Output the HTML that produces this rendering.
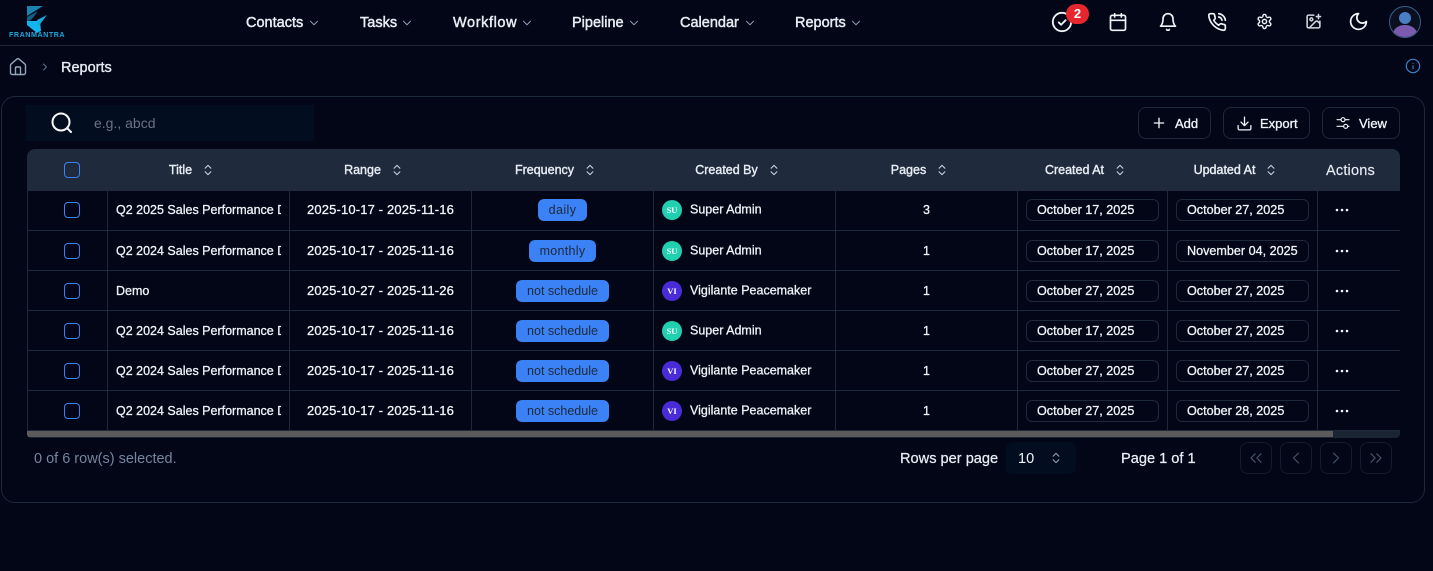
<!DOCTYPE html>
<html><head><meta charset="utf-8"><title>Reports</title>
<style>
*{box-sizing:border-box;margin:0;padding:0}
html,body{width:1433px;height:571px;overflow:hidden;background:#020617;color:#f1f5f9;font-family:"Liberation Sans",sans-serif}
.a{position:absolute;white-space:nowrap}
svg{fill:none;stroke:currentColor;stroke-width:2;stroke-linecap:round;stroke-linejoin:round;display:block}
.nav{top:15px;font-size:14.5px;line-height:17px;color:#e8edf4;-webkit-text-stroke:.45px #e8edf4}
.nc{top:16px;width:14px;height:14px;color:#94a3b8;stroke-width:1.6}
.ic{width:20px;height:20px;color:#f1f5f9}
.btn{top:107px;height:32px;border:1px solid #1e293b;border-radius:8px}
.bt{top:116px;font-size:13px;line-height:15px;-webkit-text-stroke:.3px #f1f5f9}
table{position:absolute;left:27px;top:149px;width:1373px;table-layout:fixed;border-collapse:separate;border-spacing:0}
th{height:42px;background:#1f2a3c;font-size:12.5px;font-weight:400;color:#e8edf4;text-align:center;white-space:nowrap;padding-right:14px;-webkit-text-stroke:.4px #e8edf4}
th:first-child{border-top-left-radius:8px;padding-right:0}
th:last-child{border-top-right-radius:8px;font-size:14.5px;letter-spacing:.2px;text-align:left;padding:2px 0 0 8px;-webkit-text-stroke:.15px #e8edf4}
th svg{display:inline-block;width:14px;height:14px;vertical-align:-3px;margin-left:9px;color:#cbd5e1;stroke-width:1.8}
td{height:40px;border-right:1px solid #1e293b;border-bottom:1px solid #1e293b;font-size:12.5px;text-align:center;white-space:nowrap;overflow:hidden;color:#f1f5f9;-webkit-text-stroke:.28px #f1f5f9}
tr.f td{padding-bottom:2px}
td:first-child{border-left:1px solid #1e293b}
td:last-child{border-right:0}
td:nth-child(3){font-size:13px;letter-spacing:.15px}
.t{text-align:left;padding:0 8px}
.t div{overflow:hidden;width:165px}
.cb{display:block;width:16px;height:16px;border:1.2px solid #3b82f6;border-radius:4px;margin:0 auto 0 36px}
th .cb{margin-left:37px}
.b{display:inline-block;height:22px;line-height:22px;background:#3b82f6;color:#1e293b;border-radius:6px;padding:0 11px;font-size:12.5px;-webkit-text-stroke:0}
.u{text-align:left;padding-left:8px}
.av{display:inline-block;width:20px;height:20px;border-radius:50%;color:#fff;font:700 8.5px/20px "Liberation Serif",serif;text-align:center;vertical-align:middle;margin-right:8px;-webkit-text-stroke:0}
.su{background:#20d0b0}.vi{background:#4a2bd8}
.d{display:block;width:133px;height:22px;line-height:20px;border:1px solid #1e293b;border-radius:6px;margin-left:8px;text-align:left;padding-left:10px;font-size:12.6px}
.dots{display:block;width:14px;height:4px;margin-left:17px;color:#f1f5f9}
.pg{top:442px;width:32px;height:32px;border:1px solid #141c2b;border-radius:8px;color:#475569;padding:5px}
.pg svg{width:20px;height:20px;stroke-width:1.4}
</style></head><body>
<svg width="0" height="0" style="position:absolute"><defs>
<symbol id="s" viewBox="0 0 24 24"><path d="m7 15 5 5 5-5M7 9l5-5 5 5"/></symbol>
<symbol id="c" viewBox="0 0 24 24"><path d="m6 9 6 6 6-6"/></symbol>
<symbol id="o" viewBox="0 0 14 4"><circle cx="2" cy="2" r="1.3" fill="currentColor" stroke="none"/><circle cx="7" cy="2" r="1.3" fill="currentColor" stroke="none"/><circle cx="12" cy="2" r="1.3" fill="currentColor" stroke="none"/></symbol>
</defs></svg>

<!-- header -->
<div class="a" style="left:0;top:45px;width:1433px;height:1px;background:#1e2533"></div>
<svg class="a" style="left:26px;top:5px;stroke:none" width="22" height="28" viewBox="0 0 22 28"><polygon points="1,1 17,1 1,11" fill="#1a84ae"/><polygon points="1,12 12,6 6,14 1,17" fill="#0f5f86"/><polygon points="1,16 14,16 15,26 11,28 1,20" fill="#13b5ee"/><polygon points="21,10 12,22 11,15" fill="#17a9dc"/></svg>
<div class="a" style="left:9px;top:30px;font-size:7.2px;line-height:10px;font-weight:700;color:#19a9da;letter-spacing:.5px">FRANMANTRA</div>

<div class="a nav" style="left:246px">Contacts</div><svg class="a nc" style="left:307px"><use href="#c"/></svg>
<div class="a nav" style="left:360px">Tasks</div><svg class="a nc" style="left:400px"><use href="#c"/></svg>
<div class="a nav" style="left:453px;letter-spacing:.6px">Workflow</div><svg class="a nc" style="left:520px"><use href="#c"/></svg>
<div class="a nav" style="left:572px">Pipeline</div><svg class="a nc" style="left:627px"><use href="#c"/></svg>
<div class="a nav" style="left:680px">Calendar</div><svg class="a nc" style="left:743px"><use href="#c"/></svg>
<div class="a nav" style="left:795px">Reports</div><svg class="a nc" style="left:849px"><use href="#c"/></svg>

<svg class="a ic" style="left:1051px;top:11px;width:22px;height:22px" viewBox="0 0 24 24"><circle cx="12" cy="12" r="10"/><path d="m8.5 12.5 2.5 2.5 5-5"/></svg>
<div class="a" style="left:1066px;top:4px;width:23px;height:20px;border-radius:10px;background:#e5272d;color:#fff;font-size:13px;font-weight:700;line-height:20px;text-align:center">2</div>
<svg class="a ic" style="left:1108px;top:12px" viewBox="0 0 24 24"><path d="M8 2v4M16 2v4"/><rect x="3" y="4" width="18" height="18" rx="2"/><path d="M3 10h18"/></svg>
<svg class="a ic" style="left:1158px;top:12px" viewBox="0 0 24 24"><path d="M6 8a6 6 0 0 1 12 0c0 7 3 9 3 9H3s3-2 3-9"/><path d="M10.3 21a1.94 1.94 0 0 0 3.4 0"/></svg>
<svg class="a ic" style="left:1207px;top:12px" viewBox="0 0 24 24"><path d="M22 16.92v3a2 2 0 0 1-2.18 2 19.79 19.79 0 0 1-8.63-3.07 19.5 19.5 0 0 1-6-6 19.79 19.79 0 0 1-3.07-8.67A2 2 0 0 1 4.11 2h3a2 2 0 0 1 2 1.72 12.84 12.84 0 0 0 .7 2.81 2 2 0 0 1-.45 2.11L8.09 9.91a16 16 0 0 0 6 6l1.27-1.27a2 2 0 0 1 2.11-.45 12.84 12.84 0 0 0 2.81.7A2 2 0 0 1 22 16.92z"/><path d="M14.05 2a9 9 0 0 1 8 7.94M14.05 6A5 5 0 0 1 18 10"/></svg>
<svg class="a ic" style="left:1256px;top:13px;width:17px;height:17px" viewBox="0 0 24 24"><path d="M12.22 2h-.44a2 2 0 0 0-2 2v.18a2 2 0 0 1-1 1.73l-.43.25a2 2 0 0 1-2 0l-.15-.08a2 2 0 0 0-2.73.73l-.22.38a2 2 0 0 0 .73 2.73l.15.1a2 2 0 0 1 1 1.72v.51a2 2 0 0 1-1 1.74l-.15.09a2 2 0 0 0-.73 2.73l.22.38a2 2 0 0 0 2.73.73l.15-.08a2 2 0 0 1 2 0l.43.25a2 2 0 0 1 1 1.73V20a2 2 0 0 0 2 2h.44a2 2 0 0 0 2-2v-.18a2 2 0 0 1 1-1.73l.43-.25a2 2 0 0 1 2 0l.15.08a2 2 0 0 0 2.73-.73l.22-.39a2 2 0 0 0-.73-2.73l-.15-.08a2 2 0 0 1-1-1.74v-.5a2 2 0 0 1 1-1.74l.15-.09a2 2 0 0 0 .73-2.73l-.22-.38a2 2 0 0 0-2.73-.73l-.15.08a2 2 0 0 1-2 0l-.43-.25a2 2 0 0 1-1-1.73V4a2 2 0 0 0-2-2z"/><circle cx="12" cy="12" r="3"/></svg>
<svg class="a ic" style="left:1305px;top:13px;width:17px;height:17px;color:#d4d8de;stroke-width:2.2" viewBox="0 0 24 24"><path d="M16 5h6M19 2v6M21 11.5V19a2 2 0 0 1-2 2H5a2 2 0 0 1-2-2V5a2 2 0 0 1 2-2h7.5"/><path d="m21 15-3.1-3.1a2 2 0 0 0-2.8 0L6 21"/><circle cx="9" cy="9" r="2"/></svg>
<svg class="a ic" style="left:1348px;top:11px;width:21px;height:21px" viewBox="0 0 24 24"><path d="M12 3a6 6 0 0 0 9 9 9 9 0 1 1-9-9Z"/></svg>
<div class="a" style="left:1389px;top:6px;width:32px;height:32px;border-radius:50%;border:1px solid #3a5f86;overflow:hidden;background:#0a1020">
<div class="a" style="left:9px;top:5px;width:12px;height:12px;border-radius:50%;background:#4a7fc4"></div>
<div class="a" style="left:3px;top:18px;width:24px;height:18px;border-radius:50%;background:#7a5bb0"></div></div>

<!-- breadcrumb -->
<svg class="a" style="left:8px;top:57px;color:#94a3b8;stroke-width:1.7" width="20" height="20" viewBox="0 0 24 24"><path d="M15 21v-8a1 1 0 0 0-1-1h-4a1 1 0 0 0-1 1v8"/><path d="M3 10a2 2 0 0 1 .709-1.528l7-5.999a2 2 0 0 1 2.582 0l7 5.999A2 2 0 0 1 21 10v9a2 2 0 0 1-2 2H5a2 2 0 0 1-2-2z"/></svg>
<svg class="a" style="left:39px;top:61px;color:#64748b" width="12" height="12" viewBox="0 0 24 24"><path d="m9 18 6-6-6-6"/></svg>
<div class="a" style="left:61px;top:60px;font-size:14.5px;line-height:17px;color:#e8edf4;-webkit-text-stroke:.35px #e8edf4">Reports</div>
<svg class="a" style="left:1405px;top:58px;color:#3b82c4;stroke-width:1.8" width="16" height="16" viewBox="0 0 24 24"><circle cx="12" cy="12" r="10"/><path d="M12 16v-4M12 8h.01"/></svg>

<!-- card -->
<div class="a" style="left:1px;top:96px;width:1424px;height:407px;border:1px solid #1e293b;border-radius:14px"></div>
<div class="a" style="left:26px;top:105px;width:288px;height:36px;background:#020d20"></div>
<svg class="a" style="left:50px;top:111px;color:#f8fafc;stroke-width:2" width="24" height="24" viewBox="0 0 24 24"><circle cx="11" cy="11" r="8.5"/><path d="m21 21-3.8-3.8"/></svg>
<div class="a" style="left:94px;top:115px;font-size:14px;line-height:16px;color:#6b7280">e.g., abcd</div>

<div class="a btn" style="left:1138px;width:73px"></div>
<svg class="a" style="left:1151px;top:115px" width="16" height="16" viewBox="0 0 24 24"><path d="M5 12h14M12 5v14"/></svg>
<div class="a bt" style="left:1175px">Add</div>
<div class="a btn" style="left:1223px;width:87px"></div>
<svg class="a" style="left:1236px;top:115px;stroke-width:1.8" width="17" height="17" viewBox="0 0 24 24"><path d="M21 15v4a2 2 0 0 1-2 2H5a2 2 0 0 1-2-2v-4M7 10l5 5 5-5M12 15V3"/></svg>
<div class="a bt" style="left:1260px">Export</div>
<div class="a btn" style="left:1322px;width:78px"></div>
<svg class="a" style="left:1335px;top:115px;stroke-width:1.7" width="16" height="16" viewBox="0 0 24 24"><path d="M3 7h6M15 7h6M3 17h10M19 17h2"/><circle cx="12" cy="7" r="3"/><circle cx="16" cy="17" r="3"/></svg>
<div class="a bt" style="left:1359px">View</div>

<!-- table -->
<table>
<colgroup><col style="width:81px"><col style="width:182px"><col style="width:182px"><col style="width:182px"><col style="width:182px"><col style="width:182px"><col style="width:150px"><col style="width:150px"><col style="width:82px"></colgroup>
<thead><tr>
<th><span class="cb"></span></th>
<th>Title<svg><use href="#s"/></svg></th>
<th>Range<svg><use href="#s"/></svg></th>
<th>Frequency<svg><use href="#s"/></svg></th>
<th>Created By<svg><use href="#s"/></svg></th>
<th>Pages<svg><use href="#s"/></svg></th>
<th>Created At<svg><use href="#s"/></svg></th>
<th>Updated At<svg><use href="#s"/></svg></th>
<th>Actions</th>
</tr></thead>
<tbody>
<tr class="f"><td><span class="cb"></span></td><td class="t"><div>Q2 2025 Sales Performance Dashboard</div></td><td>2025-10-17 - 2025-11-16</td><td><span class="b" style="letter-spacing:.4px">daily</span></td><td class="u"><span class="av su">SU</span>Super Admin</td><td>3</td><td><span class="d">October 17, 2025</span></td><td><span class="d">October 27, 2025</span></td><td><svg class="dots"><use href="#o"/></svg></td></tr>
<tr><td><span class="cb"></span></td><td class="t"><div>Q2 2024 Sales Performance Dashboard</div></td><td>2025-10-17 - 2025-11-16</td><td><span class="b" style="letter-spacing:.3px">monthly</span></td><td class="u"><span class="av su">SU</span>Super Admin</td><td>1</td><td><span class="d">October 17, 2025</span></td><td><span class="d">November 04, 2025</span></td><td><svg class="dots"><use href="#o"/></svg></td></tr>
<tr><td><span class="cb"></span></td><td class="t"><div>Demo</div></td><td>2025-10-27 - 2025-11-26</td><td><span class="b">not schedule</span></td><td class="u"><span class="av vi">VI</span>Vigilante Peacemaker</td><td>1</td><td><span class="d">October 27, 2025</span></td><td><span class="d">October 27, 2025</span></td><td><svg class="dots"><use href="#o"/></svg></td></tr>
<tr><td><span class="cb"></span></td><td class="t"><div>Q2 2024 Sales Performance Dashboard</div></td><td>2025-10-17 - 2025-11-16</td><td><span class="b">not schedule</span></td><td class="u"><span class="av su">SU</span>Super Admin</td><td>1</td><td><span class="d">October 17, 2025</span></td><td><span class="d">October 27, 2025</span></td><td><svg class="dots"><use href="#o"/></svg></td></tr>
<tr><td><span class="cb"></span></td><td class="t"><div>Q2 2024 Sales Performance Dashboard</div></td><td>2025-10-17 - 2025-11-16</td><td><span class="b">not schedule</span></td><td class="u"><span class="av vi">VI</span>Vigilante Peacemaker</td><td>1</td><td><span class="d">October 27, 2025</span></td><td><span class="d">October 27, 2025</span></td><td><svg class="dots"><use href="#o"/></svg></td></tr>
<tr><td><span class="cb"></span></td><td class="t"><div>Q2 2024 Sales Performance Dashboard</div></td><td>2025-10-17 - 2025-11-16</td><td><span class="b">not schedule</span></td><td class="u"><span class="av vi">VI</span>Vigilante Peacemaker</td><td>1</td><td><span class="d">October 27, 2025</span></td><td><span class="d">October 28, 2025</span></td><td><svg class="dots"><use href="#o"/></svg></td></tr>
</tbody></table>
<div class="a" style="left:27px;top:431px;width:1373px;height:7px;background:#1a2432;border-radius:0 0 4px 4px;overflow:hidden"><div style="width:1306px;height:6px;background:#5b5b5b"></div></div>

<!-- footer -->
<div class="a" style="left:34px;top:451px;font-size:14.5px;line-height:17px;color:#7486a0">0 of 6 row(s) selected.</div>
<div class="a" style="left:900px;top:451px;font-size:14.6px;line-height:17px;color:#e8edf4;-webkit-text-stroke:.25px #e8edf4">Rows per page</div>
<div class="a" style="left:1006px;top:442px;width:70px;height:32px;border-radius:6px;background:#020d20"></div>
<div class="a" style="left:1018px;top:451px;font-size:14.5px;line-height:17px">10</div>
<svg class="a" style="left:1049px;top:451px;color:#94a3b8;stroke-width:1.8" width="14" height="14"><use href="#s"/></svg>
<div class="a" style="left:1121px;top:451px;font-size:14.6px;line-height:17px;color:#e8edf4;-webkit-text-stroke:.25px #e8edf4">Page 1 of 1</div>
<div class="a pg" style="left:1240px"><svg viewBox="0 0 24 24"><path d="m11 17-5-5 5-5M18 17l-5-5 5-5"/></svg></div>
<div class="a pg" style="left:1280px"><svg viewBox="0 0 24 24"><path d="m15 18-6-6 6-6"/></svg></div>
<div class="a pg" style="left:1320px"><svg viewBox="0 0 24 24"><path d="m9 18 6-6-6-6"/></svg></div>
<div class="a pg" style="left:1360px"><svg viewBox="0 0 24 24"><path d="m6 17 5-5-5-5M13 17l5-5-5-5"/></svg></div>
</body></html>
